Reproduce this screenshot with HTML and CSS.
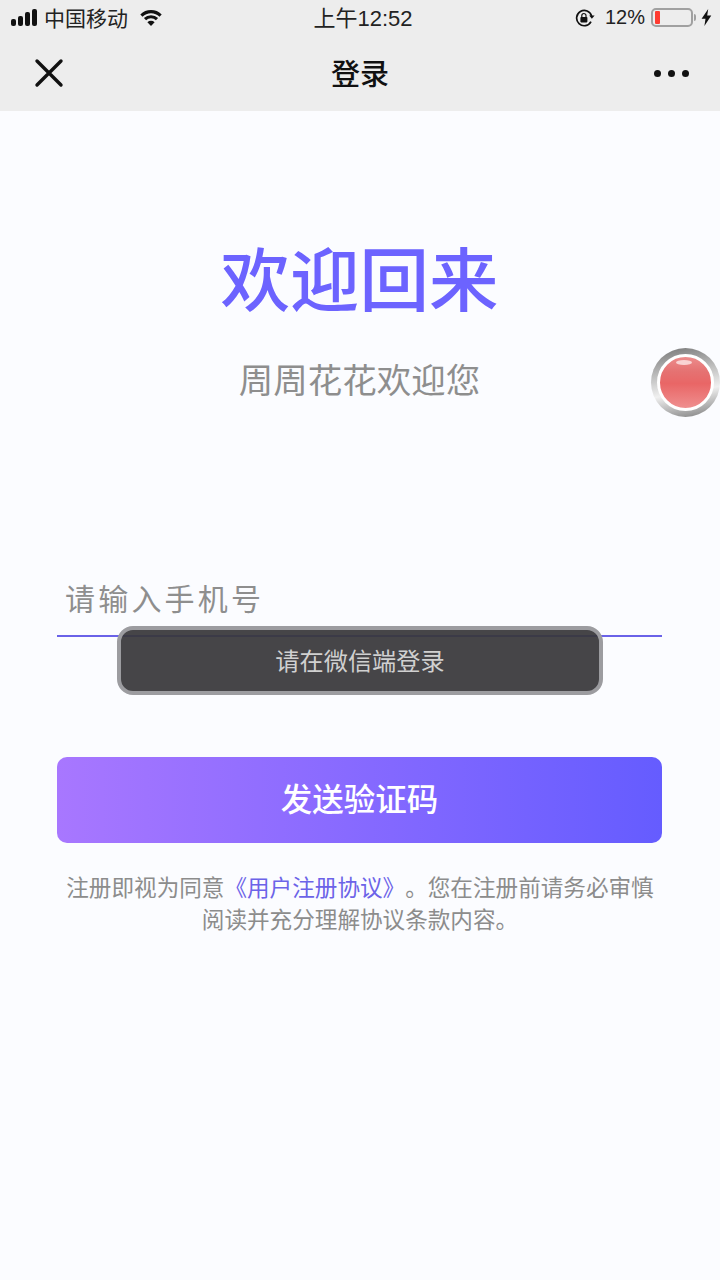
FILE: index.html
```html
<!DOCTYPE html>
<html lang="zh-CN">
<head>
  <meta charset="UTF-8">
  <title>登录</title>
  <meta name="viewport" content="width=device-width, initial-scale=1">
  <link rel="stylesheet" href="styles.css">
</head>
<body>
  <div class="topbar">
    <div class="status">
      <div class="status-left">
        <div class="signal"><i class="s1"></i><i class="s2"></i><i class="s3"></i><i class="s4"></i></div>
        <span class="carrier">中国移动</span>
        <svg class="wifi" width="24" height="17" viewBox="0 0 24 17">
          <path d="M12 17 8.4 13.2a5.2 5.2 0 0 1 7.2 0z" fill="#111"/>
          <path d="M6 10.2a8.5 8.5 0 0 1 12 0" fill="none" stroke="#111" stroke-width="3.1"/>
          <path d="M2.4 6.6a13.6 13.6 0 0 1 19.2 0" fill="none" stroke="#111" stroke-width="3.1"/>
        </svg>
      </div>
      <div class="clock">上午12:52</div>
      <div class="status-right">
        <svg class="lock" width="20" height="18" viewBox="0 0 20 18">
          <path d="M16.6 7.2A7.6 7.6 0 1 0 16 12.6" fill="none" stroke="#111" stroke-width="1.7"/>
          <path d="M14.2 6.6h5.4l-2.7 3.2z" fill="#111"/>
          <rect x="5.4" y="8" width="7" height="5.4" rx="0.8" fill="#111"/>
          <path d="M6.8 8V6.6a2.1 2.1 0 0 1 4.2 0V8" fill="none" stroke="#111" stroke-width="1.2"/>
        </svg>
        <span class="percent">12%</span>
        <div class="battery"><div class="battery-level"></div></div>
        <div class="battery-cap"></div>
        <svg class="bolt" width="11" height="17" viewBox="0 0 11 17">
          <path d="M7.2 0 .6 9.8h3.9L3.4 17l6.9-10.4H6.2z" fill="#111"/>
        </svg>
      </div>
    </div>
    <div class="nav">
      <svg class="close" width="30" height="30" viewBox="0 0 30 30">
        <path d="M3 3 27 27M27 3 3 27" stroke="#111" stroke-width="3.4" stroke-linecap="round"/>
      </svg>
      <div class="nav-title">登录</div>
      <div class="more"><i></i><i></i><i></i></div>
    </div>
  </div>

  <div class="page">
    <h1 class="welcome">欢迎回来</h1>
    <div class="subtitle">周周花花欢迎您</div>

    <div class="phone-field">
      <div class="placeholder">请输入手机号</div>
    </div>

    <button class="send-btn" type="button">发送验证码</button>

    <p class="agreement">注册即视为同意<a class="link">《用户注册协议》</a>。您在注册前请务必审慎阅读并充分理解协议条款内容。</p>
  </div>

  <div class="toast">请在微信端登录</div>
  <div class="float-ball">
    <div class="ball-inner"><div class="ball-shine"></div></div>
  </div>
</body>
</html>
```

FILE: styles.css
```css
* { box-sizing: border-box; }
html, body { margin: 0; padding: 0; }
body {
  width: 720px;
  height: 1280px;
  overflow: hidden;
  position: relative;
  background: #FBFCFF;
  font-family: "Noto Sans CJK SC", "Liberation Sans", sans-serif;
  text-spacing-trim: space-all;
}

/* top */
.topbar { background: #EDEDED; height: 111px; }
.status { height: 35px; display: flex; align-items: center; justify-content: space-between; padding: 0 8px 0 11px; position: relative; color: #111; }
.status-left { display: flex; align-items: center; }
.signal { display: flex; align-items: flex-end; gap: 2px; height: 17px; margin-right: 7px; }
.signal i { display: block; width: 5px; background: #111; border-radius: 2px; }
.s1 { height: 7px; }
.s2 { height: 10px; }
.s3 { height: 14px; }
.s4 { height: 17px; }
.carrier { font-size: 21px; line-height: 35px; color: #222; }
.wifi { margin-left: 11px; margin-top: -1px; }
.clock { position: absolute; top: 0; left: 0; right: 0; padding-left: 6px; text-align: center; font-family: "Liberation Sans", "Noto Sans CJK SC", sans-serif; font-size: 22px; line-height: 37px; color: #222; }
.status-right { display: flex; align-items: center; position: relative; z-index: 1; }
.lock { margin-right: 10px; }
.percent { font-size: 20px; font-family: "Liberation Sans", sans-serif; color: #222; margin-right: 6px; }
.battery { width: 42px; height: 19px; border: 2px solid #a0a0a0; border-radius: 5px; padding: 1px 2px; }
.battery-level { width: 5px; height: 100%; background: #FF3B30; border-radius: 1px; }
.battery-cap { width: 2px; height: 7px; background: #a0a0a0; border-radius: 0 2px 2px 0; margin-left: 1px; margin-right: 5px; }

.nav { height: 76px; display: flex; align-items: center; justify-content: space-between; padding: 0 31px 0 34px; position: relative; }
.close { display: block; margin-top: -1px; }
.nav-title { position: absolute; top: 0; left: 0; right: 0; text-align: center; font-size: 29px; line-height: 75px; font-weight: 500; color: #111; }
.more { display: flex; gap: 7px; }
.more i { display: block; width: 7px; height: 7px; border-radius: 50%; background: #111; }

/* main */
.page { padding: 0 58px 0 57px; display: flex; flex-direction: column; align-items: stretch; }
.welcome { margin: 119px 0 0; text-align: center; font-size: 69.5px; line-height: 92px; font-weight: 500; color: #6C63FF; }
.subtitle { margin-top: 32px; text-align: center; font-size: 34.5px; line-height: 48px; color: #8E8E8E; }
.phone-field { margin-top: 166px; height: 69px; border-bottom: 2px solid #6A62E8; padding: 7px 8px 0; }
.placeholder { font-size: 30px; line-height: 44px; letter-spacing: 3.2px; color: #8E8E8E; }
.send-btn {
  display: block;
  margin-top: 120px;
  height: 86px;
  width: 100%;
  padding: 0 0 6px;
  border: none;
  border-radius: 10px;
  background: linear-gradient(90deg, #A877FF, #655CFF);
  color: #fff;
  font-family: inherit;
  font-size: 31.5px;
  font-weight: 500;
}
.agreement { margin: 28px 0 0; padding-left: 1px; text-align: center; font-size: 22.6px; line-height: 32px; color: #8C8C8C; }
.link { color: #6C63E8; }

/* over content */
.toast {
  position: absolute;
  left: 117px;
  top: 626px;
  width: 486px;
  height: 69px;
  border: 4px solid #9C9CA0;
  border-radius: 16px;
  background: rgba(56, 55, 58, 0.93);
  color: #D0D0D0;
  font-size: 24.2px;
  line-height: 59px;
  text-align: center;
}
.float-ball {
  position: absolute;
  left: 651px;
  top: 348px;
  width: 69px;
  height: 69px;
  border-radius: 50%;
  padding: 6px;
  background: linear-gradient(170deg, #757575, #bdbdbd 35%, #f0f0f0 62%, #7d7d7d);
}
.ball-inner {
  width: 57px;
  height: 57px;
  border-radius: 50%;
  border: 3px solid #fff;
  position: relative;
  overflow: hidden;
  background: linear-gradient(180deg, #ec8c8c 0, #e57272 28%, #e96666 52%, #ef8f8f 100%);
}
.ball-shine {
  position: absolute;
  left: 16px;
  top: 3px;
  width: 16px;
  height: 5px;
  border-radius: 50%;
  background: #f9d4d4;
}
```
